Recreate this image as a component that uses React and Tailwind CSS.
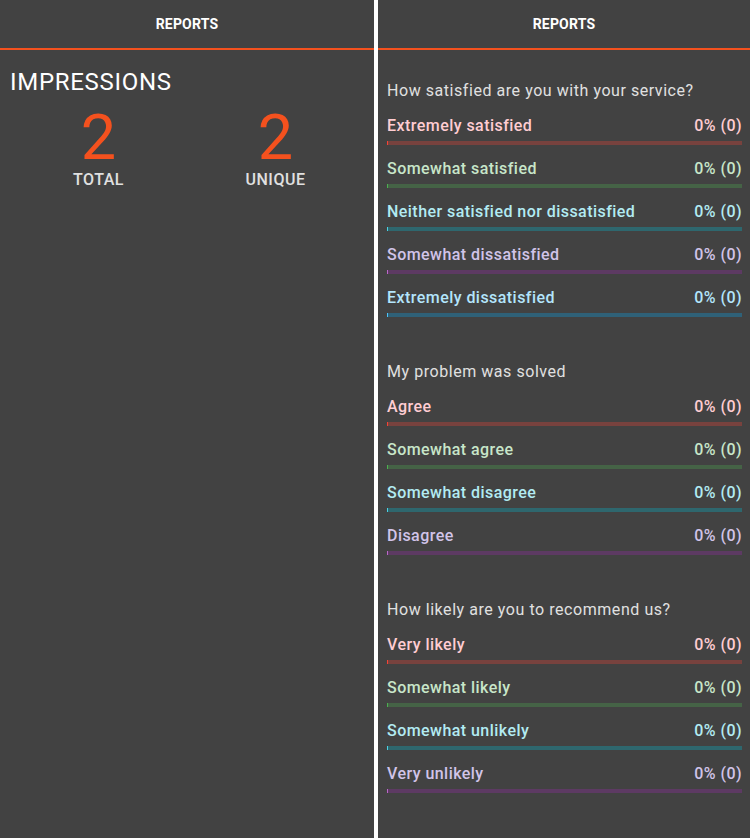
import React from "react";

const colors = {
  red: { text: "text-[#ffcdd2]", track: "bg-[#f44336]/30", fill: "bg-[#f44336]" },
  green: { text: "text-[#c8e6c9]", track: "bg-[#4caf50]/30", fill: "bg-[#4caf50]" },
  cyan: { text: "text-[#b2ebf2]", track: "bg-[#00bcd4]/30", fill: "bg-[#4dd0e1]" },
  purple: { text: "text-[#d1c4e9]", track: "bg-[#9c27b0]/30", fill: "bg-[#ba68c8]" },
  blue: { text: "text-[#b3e5fc]", track: "bg-[#03a9f4]/30", fill: "bg-[#4fc3f7]" },
};

const sections = [
  {
    q: "How satisfied are you with your service?",
    rows: [
      ["Extremely satisfied", "red"],
      ["Somewhat satisfied", "green"],
      ["Neither satisfied nor dissatisfied", "cyan"],
      ["Somewhat dissatisfied", "purple"],
      ["Extremely dissatisfied", "blue"],
    ],
  },
  {
    q: "My problem was solved",
    rows: [
      ["Agree", "red"],
      ["Somewhat agree", "green"],
      ["Somewhat disagree", "cyan"],
      ["Disagree", "purple"],
    ],
  },
  {
    q: "How likely are you to recommend us?",
    rows: [
      ["Very likely", "red"],
      ["Somewhat likely", "green"],
      ["Somewhat unlikely", "cyan"],
      ["Very unlikely", "purple"],
    ],
  },
];

function Header() {
  return (
    <div className="h-[48px] flex items-center justify-center border-b-2 border-[#f4511e] box-content">
      <span className="text-white text-[14px] font-bold tracking-[0.2px]">REPORTS</span>
    </div>
  );
}

export default function App() {
  return (
    <div
      className="flex gap-[4px] bg-white h-[838px] w-[750px] overflow-hidden"
      style={{ fontFamily: "Roboto, 'Liberation Sans', sans-serif" }}
    >
      <div className="w-[374px] shrink-0 bg-[#424242] flex flex-col">
        <Header />
        <div className="px-[10px] pt-[18px]">
          <div className="text-white text-[24px] leading-[28px] tracking-[0.7px]">IMPRESSIONS</div>
          <div className="grid grid-cols-2 mt-[14px]">
            <div className="flex flex-col items-center">
              <div className="text-[#f4511e] text-[63px] leading-[56px]">2</div>
              <div className="text-[#e0e0e0] text-[16px] font-medium leading-[18px] tracking-[0.5px] mt-[5px]">TOTAL</div>
            </div>
            <div className="flex flex-col items-center">
              <div className="text-[#f4511e] text-[63px] leading-[56px]">2</div>
              <div className="text-[#e0e0e0] text-[16px] font-medium leading-[18px] tracking-[0.5px] mt-[5px]">UNIQUE</div>
            </div>
          </div>
        </div>
      </div>
      <div className="flex-1 bg-[#424242] flex flex-col">
        <Header />
        <div className="pl-[9px] pr-[8px] pt-[31px] flex flex-col">
          {sections.map((s, i) => (
            <div key={i} className="mb-[31px]">
              <div className="text-[#e0e0e0] text-[16px] leading-[20px] mb-[15px] tracking-[0.55px]">{s.q}</div>
              {s.rows.map(([label, c]) => (
                <div key={label} className="mb-[14px]">
                  <div className={`flex justify-between text-[16px] font-medium leading-[20px] tracking-[0.45px] ${colors[c].text}`}>
                    <span>{label}</span>
                    <span>0% (0)</span>
                  </div>
                  <div className={`mt-[5px] h-[4px] ${colors[c].track} flex`}>
                    <div className={`w-[1px] h-full ${colors[c].fill}`} />
                  </div>
                </div>
              ))}
            </div>
          ))}
        </div>
      </div>
    </div>
  );
}
